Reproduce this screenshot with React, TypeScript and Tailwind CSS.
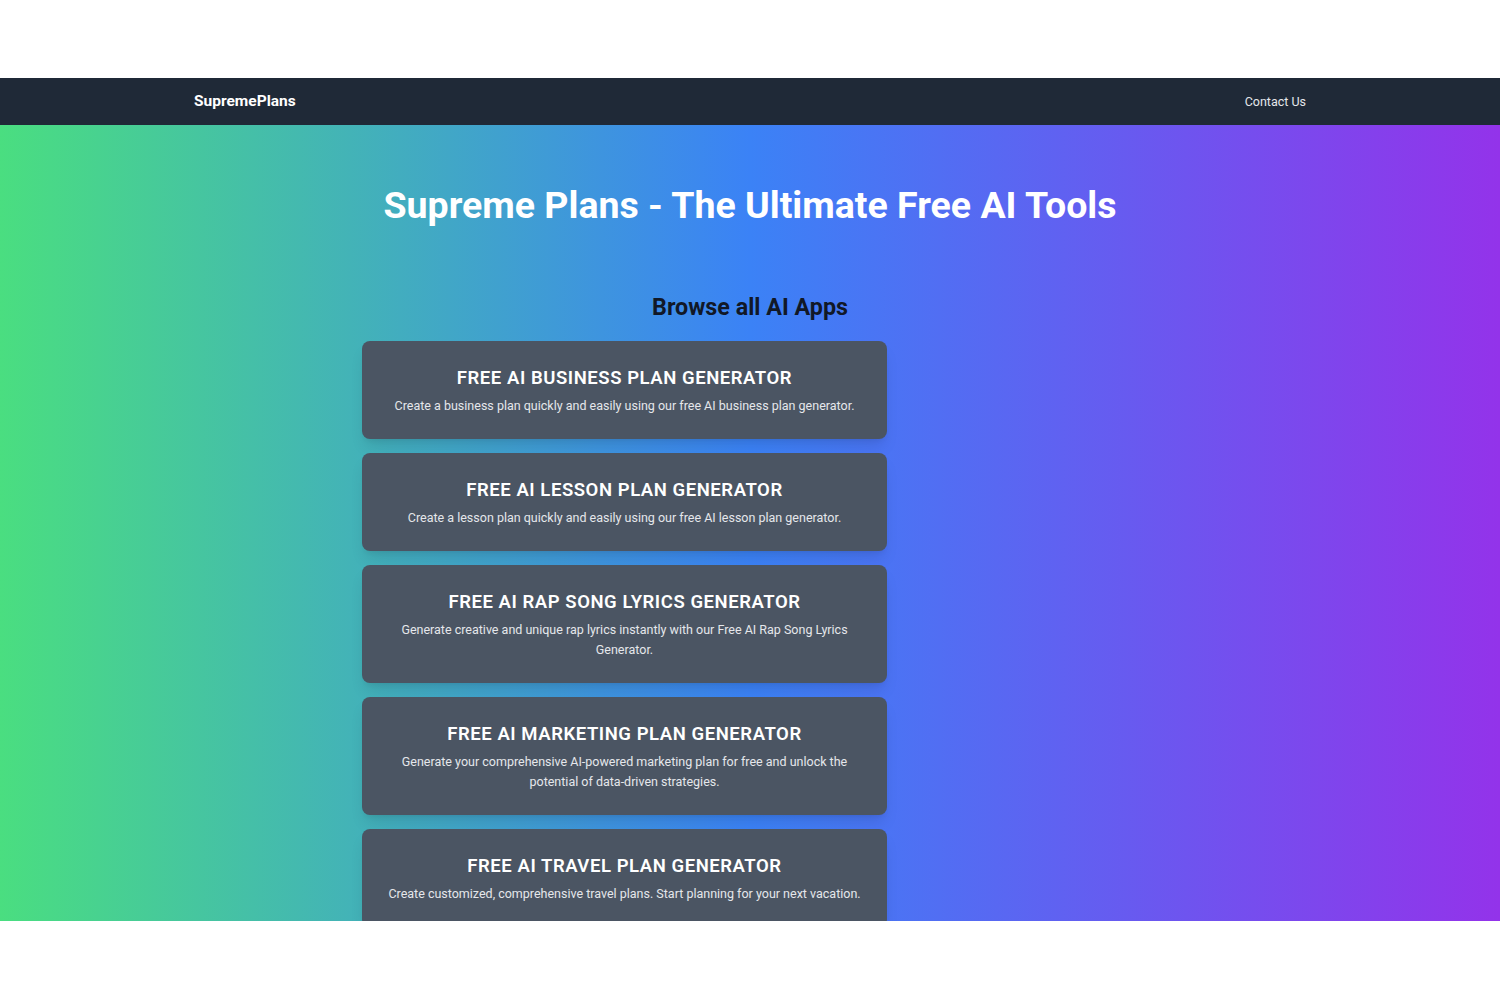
const APPS = [
  {
    title: "FREE AI BUSINESS PLAN GENERATOR",
    desc: "Create a business plan quickly and easily using our free AI business plan generator.",
  },
  {
    title: "FREE AI LESSON PLAN GENERATOR",
    desc: "Create a lesson plan quickly and easily using our free AI lesson plan generator.",
  },
  {
    title: "FREE AI RAP SONG LYRICS GENERATOR",
    desc: "Generate creative and unique rap lyrics instantly with our Free AI Rap Song Lyrics Generator.",
  },
  {
    title: "FREE AI MARKETING PLAN GENERATOR",
    desc: "Generate your comprehensive AI-powered marketing plan for free and unlock the potential of data-driven strategies.",
  },
  {
    title: "FREE AI TRAVEL PLAN GENERATOR",
    desc: "Create customized, comprehensive travel plans. Start planning for your next vacation.",
  },
];

function Navbar() {
  return (
    <nav className="h-[47px] bg-[#1f2937]">
      <div className="mx-auto flex h-full w-[1112px] items-center justify-between pt-px">
        <a href="#" className="text-[15.5px] font-bold text-white">
          SupremePlans
        </a>
        <a href="#" className="text-[12.5px] text-[#e5e7eb]">
          Contact Us
        </a>
      </div>
    </nav>
  );
}

function AppCard({ title, desc }: { title: string; desc: string }) {
  return (
    <li className="rounded-lg bg-[#4b5563] px-6 pt-[25px] pb-[23px] text-center shadow-lg">
      <h3 className="text-[18.5px] leading-6 font-semibold tracking-[0.03em] text-white">
        {title}
      </h3>
      <p className="mt-1.5 text-[12.5px] leading-5 text-[#e5e7eb]">{desc}</p>
    </li>
  );
}

export default function App() {
  return (
    <div className="min-h-screen bg-white font-['Roboto',sans-serif]">
      <div className="h-[78px]" />
      <Navbar />
      <main className="h-[796px] overflow-hidden bg-linear-to-r/srgb from-[#4ade80] via-[#3b82f6] to-[#9333ea]">
        <h1 className="pt-[60px] text-center text-[37.5px] leading-10 font-bold text-white">
          Supreme Plans - The Ultimate Free AI Tools
        </h1>
        <section className="mx-auto mt-[66px] w-[776px]">
          <h2 className="text-center text-[23.3px] leading-8 font-bold text-[#111827]">
            Browse all AI Apps
          </h2>
          <ul className="mt-[18px] flex w-[525px] flex-col gap-[14px]">
            {APPS.map((app) => (
              <AppCard key={app.title} title={app.title} desc={app.desc} />
            ))}
          </ul>
        </section>
      </main>
    </div>
  );
}
